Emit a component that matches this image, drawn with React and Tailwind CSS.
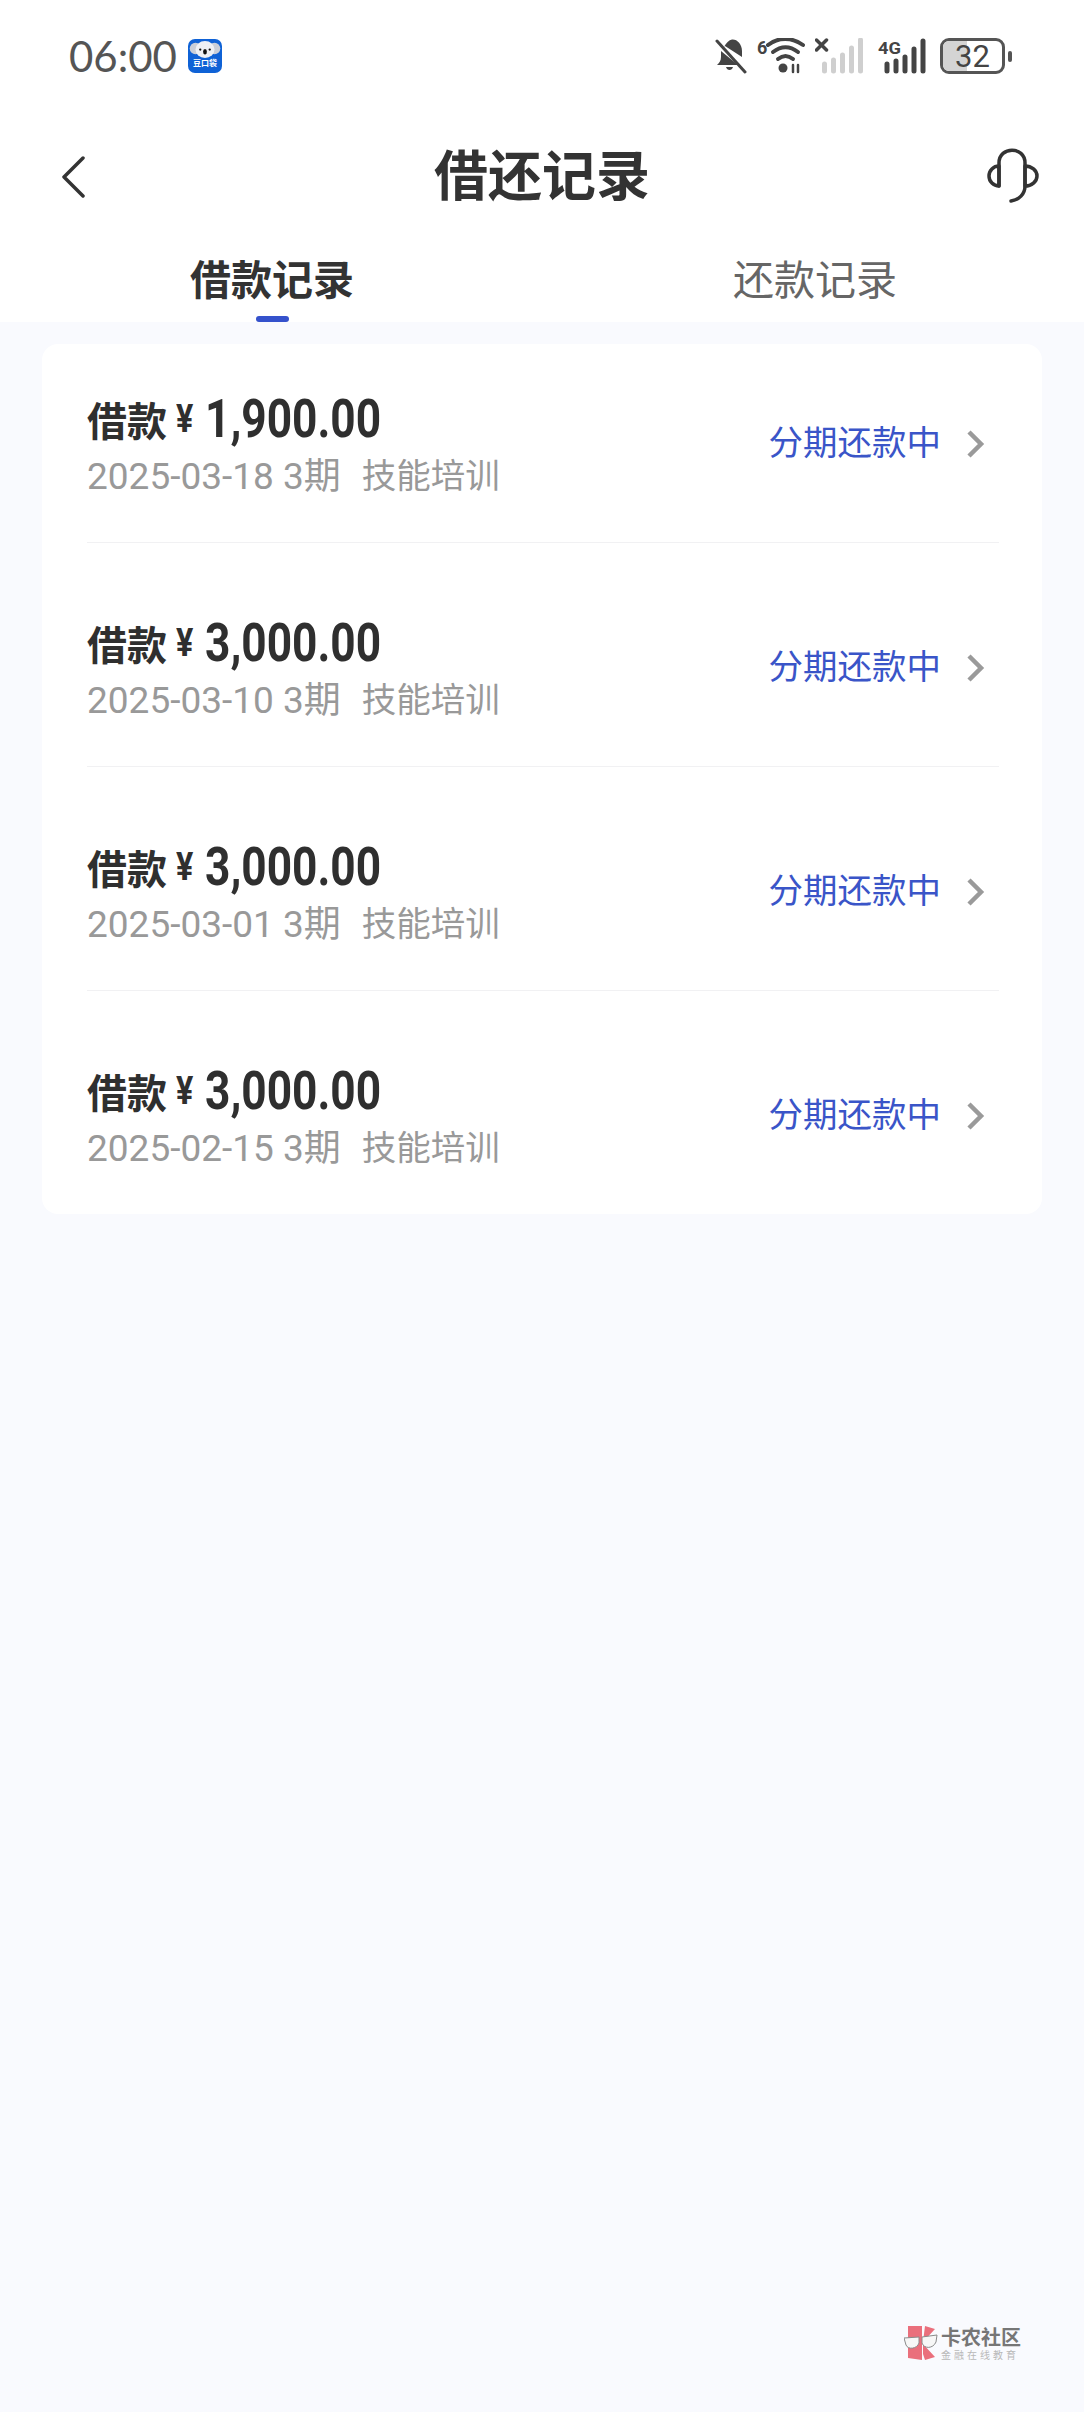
const records = [
  { amount: '1,900.00', date: '2025-03-18' },
  { amount: '3,000.00', date: '2025-03-10' },
  { amount: '3,000.00', date: '2025-03-01' },
  { amount: '3,000.00', date: '2025-02-15' },
];

const cjk = "font-['Roboto','Noto_Sans_CJK_SC',sans-serif]";

function AppBadge() {
  return (
    <div className="ml-[11px] w-[34px] h-[34px] rounded-[7px] bg-[#0f62d6] flex flex-col items-center overflow-hidden">
      <svg width="34" height="19" viewBox="0 0 32 18">
        <circle cx="7" cy="9" r="5.5" fill="#c9ced8" />
        <circle cx="25" cy="9" r="5.5" fill="#c9ced8" />
        <ellipse cx="16" cy="10" rx="9" ry="8" fill="#eef0f4" />
        <ellipse cx="16" cy="12" rx="1.8" ry="2.6" fill="#111" />
        <circle cx="11.5" cy="10" r="1.1" fill="#111" />
        <circle cx="20.5" cy="10" r="1.1" fill="#111" />
      </svg>
      <span className="text-[8px] leading-[10px] font-bold text-white font-['Noto_Sans_CJK_SC',sans-serif]">豆口袋</span>
    </div>
  );
}

function StatusIcons() {
  return (
    <div className="flex items-center">
      <svg width="32" height="36" viewBox="0 0 32 36" fill="#444">
        <path d="M9 9C11 5 14 2 17 1.500C22 1 27 6 27 13L27 19L10 8ZM6 13L23 27L2 27C4 25 6 23 6 19ZM11 29L18 29C17 33 12 33 11 29Z" />
        <path d="M2 3L30 34" stroke="#444" strokeWidth="3" strokeLinecap="round" />
      </svg>
      <svg className="ml-[9px]" width="50" height="36" viewBox="0 0 48 36" fill="none" stroke="#444" strokeLinecap="round">
        <text x="0" y="16" fontSize="18" fontWeight="700" fill="#444" stroke="none" fontFamily="Roboto, sans-serif">6</text>
        <path d="M11 7C21 -1 35 -1 46 7" strokeWidth="4" />
        <path d="M16 14C24 8 33 8 41 14" strokeWidth="4" />
        <path d="M21 21C26 17 31 17 36 21" strokeWidth="4" />
        <circle cx="26" cy="30" r="4.500" fill="#444" stroke="none" />
        <path d="M36 27L36 34M41 27L41 34" strokeWidth="2.500" />
      </svg>
      <svg className="ml-[9px]" width="51" height="36" viewBox="0 0 50 36" strokeLinecap="round">
        <path d="M1 2L11 12M11 2L1 12" stroke="#444" strokeWidth="3.500" />
        <path d="M9 26L9 33M18 22L18 33M27 17L27 33M36 10L36 33M45 2L45 33" stroke="#cfcfcf" strokeWidth="5" />
      </svg>
      <svg className="ml-[12px]" width="50" height="36" viewBox="0 0 50 36" strokeLinecap="round">
        <text x="0" y="16" fontSize="17" fontWeight="700" fill="#444" fontFamily="Roboto, sans-serif" textLength="23" lengthAdjust="spacingAndGlyphs">4G</text>
        <path d="M9 26L9 33M18 23L18 33M27 19L27 33M36 11L36 33M45 3L45 33" stroke="#444" strokeWidth="5" />
      </svg>
      <div className="ml-[12px] relative w-[65px] h-[36px] rounded-[9px] border-[3px] border-[#555] overflow-hidden flex items-center justify-center">
        <div className="absolute left-0 top-0 bottom-0 w-[24px] bg-[#d4d4d4]" />
        <span className="relative text-[31px] leading-none text-[#444] font-['Roboto',sans-serif]">32</span>
      </div>
      <div className="ml-[3px] w-[4px] h-[11px] rounded-[2px] bg-[#555]" />
    </div>
  );
}

function Headset() {
  return (
    <svg className="mt-[5px]" width="54" height="56" viewBox="0 0 54 56" fill="none" stroke="#333" strokeWidth="3.500" strokeLinecap="round" strokeLinejoin="round">
      <path d="M13 38L13 15C13 -2 39 -2 39 15L39 38C39 46 33 52 25 53" />
      <path d="M13 18A10 10 0 0 0 13 38Z" />
      <path d="M39 18A12 10 0 0 1 39 38Z" />
    </svg>
  );
}

function Watermark() {
  return (
    <div className="flex items-center justify-end pr-[63px]">
      <svg width="34" height="35" viewBox="0 0 34 35">
        <path d="M4 0L18 0L18 34L4 32ZM21 0L31 3L19 16ZM19 18L31 31L21 34L19 28Z" fill="#ea6f7c" />
        <path d="M0 12L15 11L15 17C13 23 4 24 2 19ZM18 11L33 9L32 16C29 23 20 23 18 17Z" fill="#f7f7f7" stroke="#8a8a8a" strokeWidth="1" />
      </svg>
      <div className="ml-[3px] flex flex-col items-start font-['Noto_Sans_CJK_SC',sans-serif]">
        <span className="text-[20px] leading-[22px] font-bold text-[#767676]">卡农社区</span>
        <span className="text-[10px] leading-[13px] tracking-[3px] text-[#b8b8b8]">金融在线教育</span>
      </div>
    </div>
  );
}

function RecordRow({ item, last, first }) {
  return (
    <div className={`ml-[45px] mr-[43px] flex items-start justify-between ${first ? 'pt-[45px] pb-[40px]' : 'pt-[70px] pb-[40px]'} ${last ? '' : 'border-b border-[#f1f1f3]'}`}>
      <div className="flex flex-col">
        <div className="flex items-center h-[60px] font-bold text-[#2f2f2f]">
          <span className="text-[40px] leading-none font-['Noto_Sans_CJK_SC',sans-serif]">借款</span>
          <span className="ml-[9px] inline-block origin-left scale-x-[0.85] text-[38px] leading-none font-['Roboto',sans-serif]">¥</span>
          <span className="ml-[9px] inline-block origin-left scale-x-[0.835] text-[53px] leading-none font-['Roboto',sans-serif]">{item.amount}</span>
        </div>
        <div className={`mt-[1px] h-[52px] flex items-center text-[37px] leading-none text-[#999999] ${cjk}`}>
          <span>{item.date} 3期</span>
          <span className="ml-[21px] text-[34.500px]">技能培训</span>
        </div>
      </div>
      <div className="mt-[26px] flex items-center">
        <span className="text-[34.500px] leading-[50px] text-[#3a55c8] font-['Noto_Sans_CJK_SC',sans-serif]">分期还款中</span>
        <svg className="ml-[26px] mt-[7px] mr-[14px]" width="18" height="28" viewBox="0 0 18 28" fill="none" stroke="#9a9a9a" strokeWidth="4.500">
          <path d="M2 2L14 14L2 26" />
        </svg>
      </div>
    </div>
  );
}

export default function App() {
  return (
    <div className="min-h-[2412px] bg-[#f9fafe] flex flex-col">
      {/* header */}
      <div className="bg-white h-[322px]">
        <div className="h-[112px] pl-[69px] pr-[72px] flex items-center justify-between">
          <div className="flex items-center">
            <span className="text-[42px] leading-none text-[#555555] font-['Lato','Roboto',sans-serif]">06:00</span>
            <AppBadge />
          </div>
          <StatusIcons />
        </div>
        <div className="h-[122px] px-[44px] grid grid-cols-[1fr_auto_1fr] items-center">
          <svg className="ml-[17px] mt-[8px]" width="24" height="42" viewBox="0 0 24 42" fill="none" stroke="#333" strokeWidth="3.500" strokeLinecap="round" strokeLinejoin="round">
            <path d="M22 2L3 21L22 40" />
          </svg>
          <h1 className="text-[54px] leading-none font-bold text-[#333333] font-['Noto_Sans_CJK_SC',sans-serif]">借还记录</h1>
          <div className="justify-self-end">
            <Headset />
          </div>
        </div>
        <div className="h-[88px] pl-[190px] flex gap-[379px] font-['Noto_Sans_CJK_SC',sans-serif]">
          <div className="w-[164px] flex flex-col items-center">
            <span className="h-[87px] flex items-center text-[41px] leading-none font-bold text-[#333333]">借款记录</span>
            <div className="-mt-[4px] w-[33px] h-[6px] rounded-full bg-[#3552cc]" />
          </div>
          <div className="w-[164px] flex flex-col items-center">
            <span className="h-[87px] flex items-center text-[41px] leading-none text-[#666666]">还款记录</span>
          </div>
        </div>
      </div>

      {/* list */}
      <div className="mt-[22px] mx-[42px] bg-white rounded-[16px]">
        {records.map((item, i) => (
          <RecordRow key={i} item={item} first={i === 0} last={i === records.length - 1} />
        ))}
      </div>

      <div className="mt-auto mb-[51px]">
        <Watermark />
      </div>
    </div>
  );
}
